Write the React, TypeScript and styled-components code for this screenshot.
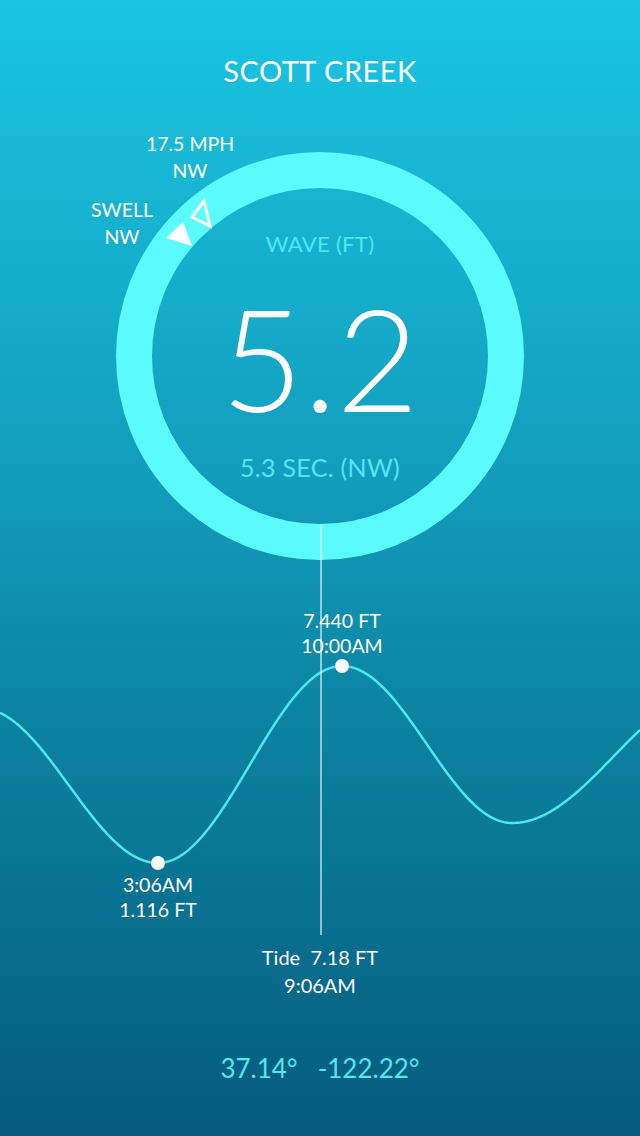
import React from "react";
import styled, { createGlobalStyle } from "styled-components";

const GlobalStyle = createGlobalStyle`
  html, body {
    margin: 0;
    padding: 0;
    background: #05597b;
  }
  * {
    box-sizing: border-box;
  }
`;

const CHART_TOP = 560;
const CHART_HEIGHT = 370;

// tide extremes in page coords (x, y)
const extremes: [number, number][] = [
  [-20, 708],
  [158, 863],
  [342, 666],
  [512, 823],
  [715, 690],
];

const buildCurve = () => {
  const pts: string[] = [];
  for (let x = 0; x <= 640; x += 2) {
    let i = 0;
    while (i < extremes.length - 2 && x > extremes[i + 1][0]) i++;
    const [x1, y1] = extremes[i];
    const [x2, y2] = extremes[i + 1];
    const t = (x - x1) / (x2 - x1);
    const f = (1 - Math.cos(Math.PI * t)) / 2;
    const y = y1 + (y2 - y1) * f - CHART_TOP;
    pts.push(`${x},${y.toFixed(2)}`);
  }
  return "M" + pts.join(" L");
};

const markers = [
  { x: 158, y: 863, lines: ["3:06AM", "1.116 FT"], below: true },
  { x: 342, y: 666, lines: ["7.440 FT", "10:00AM"], below: false },
];

export default function App() {
  const curve = buildCurve();
  return (
    <Page>
      <GlobalStyle />
      <Title>SCOTT CREEK</Title>

      <Gauge>
        <WindLabel $x={190} $y={-22}>
          17.5 MPH
          <br />
          NW
        </WindLabel>
        <WindLabel $x={122} $y={44}>
          SWELL
          <br />
          NW
        </WindLabel>
        <Ring>
          <RingLabel>WAVE (FT)</RingLabel>
          <BigValue>5.2</BigValue>
          <RingLabel $bottom>5.3 SEC. (NW)</RingLabel>
        </Ring>
        <Arrows width="640" height="408" viewBox="0 152 640 408">
          <polygon points="166,238 183,222 192,246" fill="#ffffff" />
          <polygon
            points="192,217 204,201 210,226"
            fill="none"
            stroke="#ffffff"
            strokeWidth="3"
            strokeLinejoin="miter"
          />
        </Arrows>
      </Gauge>

      <Chart>
        <svg width="640" height={CHART_HEIGHT} viewBox={`0 0 640 ${CHART_HEIGHT}`}>
          <path d={curve} fill="none" stroke="#4fe6ee" strokeWidth="2.5" />
          {markers.map((m) => (
            <circle key={m.x} cx={m.x} cy={m.y - CHART_TOP} r="7" fill="#ffffff" />
          ))}
        </svg>
        {markers.map((m) => (
          <PointLabel
            key={m.x}
            $below={m.below}
            style={{ left: m.x, top: m.below ? m.y - CHART_TOP + 9 : m.y - CHART_TOP - 8 }}
          >
            {m.lines[0]}
            <br />
            {m.lines[1]}
          </PointLabel>
        ))}
      </Chart>

      <Cursor />

      <TideReadout>
        Tide&nbsp;&nbsp;7.18 FT
        <br />
        9:06AM
      </TideReadout>

      <Coords>
        <span>37.14°</span>
        <span>-122.22°</span>
      </Coords>
    </Page>
  );
}

const Page = styled.div`
  position: relative;
  width: 640px;
  height: 1136px;
  overflow: hidden;
  display: flex;
  flex-direction: column;
  align-items: center;
  background: linear-gradient(180deg, #1ac5e2 0%, #139fbe 40%, #0b819f 65%, #055b7d 100%);
  font-family: Lato, "Open Sans", "DejaVu Sans", sans-serif;
  color: #ffffff;
`;

const Title = styled.h1`
  margin: 55px 0 0 0;
  font-size: 29px;
  line-height: 32px;
  font-weight: 400;
  letter-spacing: 0.5px;
`;

const Gauge = styled.div`
  position: relative;
  width: 640px;
  height: 408px;
  margin-top: 65px;
  display: flex;
  justify-content: center;
`;

const Ring = styled.div`
  width: 408px;
  height: 408px;
  border-radius: 50%;
  border: 36px solid #5cfbff;
  display: flex;
  flex-direction: column;
  align-items: center;
`;

const RingLabel = styled.div<{ $bottom?: boolean }>`
  margin-top: ${(p) => (p.$bottom ? "7px" : "43px")};
  font-size: ${(p) => (p.$bottom ? "25px" : "22px")};
  line-height: 26px;
  color: #52e6f1;
  letter-spacing: 0.3px;
`;

const BigValue = styled.div`
  margin-top: 10px;
  font-size: 142px;
  line-height: 180px;
  font-weight: 300;
  color: #ffffff;
`;

const WindLabel = styled.div<{ $x: number; $y: number }>`
  position: absolute;
  left: ${(p) => p.$x}px;
  top: ${(p) => p.$y}px;
  transform: translateX(-50%);
  font-size: 19.5px;
  line-height: 27px;
  text-align: center;
  white-space: nowrap;
  color: #ffffff;
`;

const Arrows = styled.svg`
  position: absolute;
  left: 0;
  top: 0;
  pointer-events: none;
`;

const Chart = styled.div`
  position: relative;
  width: 640px;
  height: ${CHART_HEIGHT}px;
  svg {
    display: block;
  }
`;

const PointLabel = styled.div<{ $below?: boolean }>`
  position: absolute;
  transform: translate(-50%, ${(p) => (p.$below ? "0" : "-100%")});
  font-size: 19.5px;
  line-height: 25px;
  text-align: center;
  white-space: nowrap;
  color: #ffffff;
`;

const Cursor = styled.div`
  position: absolute;
  left: 320px;
  top: 524px;
  width: 1.5px;
  height: 411px;
  background: rgba(255, 255, 255, 0.55);
`;

const TideReadout = styled.div`
  margin-top: 13px;
  font-size: 20px;
  line-height: 28px;
  text-align: center;
  color: #ffffff;
`;

const Coords = styled.div`
  margin-top: 54px;
  display: flex;
  gap: 20px;
  font-size: 26px;
  line-height: 30px;
  color: #55e4f0;
`;
